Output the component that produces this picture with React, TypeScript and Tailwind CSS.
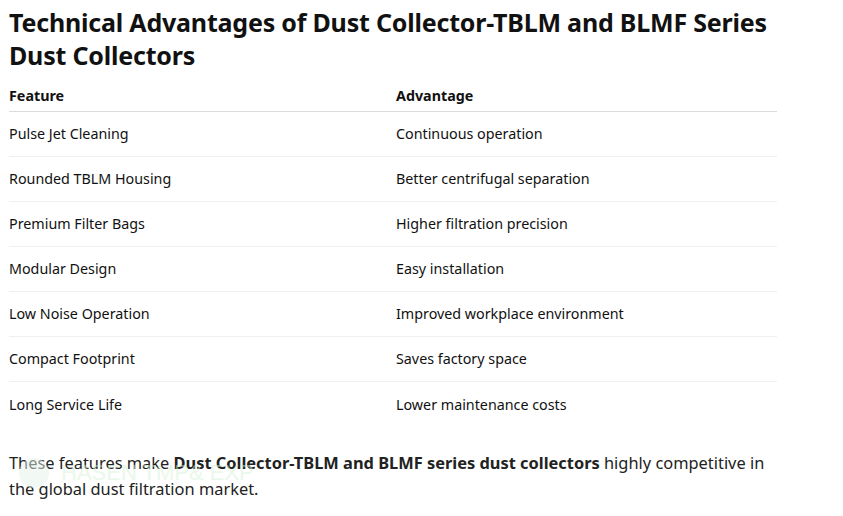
import React from "react";

const rows = [
  ["Pulse Jet Cleaning", "Continuous operation"],
  ["Rounded TBLM Housing", "Better centrifugal separation"],
  ["Premium Filter Bags", "Higher filtration precision"],
  ["Modular Design", "Easy installation"],
  ["Low Noise Operation", "Improved workplace environment"],
  ["Compact Footprint", "Saves factory space"],
  ["Long Service Life", "Lower maintenance costs"],
];

export default function App() {
  return (
    <div className="min-h-[516px] bg-white px-[9px] pt-[6px] text-[#111] font-['Noto_Sans',sans-serif]">
      <h1 className="w-[800px] text-[25px] font-bold leading-[33px] tracking-[-0.2px]">
        Technical Advantages of Dust Collector-TBLM and BLMF Series Dust Collectors
      </h1>

      {/* Table */}
      <div className="mt-[8px] w-[768px] text-[14.3px]">
        <div className="grid grid-cols-[387px_1fr] h-[32px] items-center border-b border-[#dcdcdc] font-bold">
          <div>Feature</div>
          <div>Advantage</div>
        </div>
        {rows.map(([f, a], i) => (
          <div
            key={f}
            className={
              "grid grid-cols-[387px_1fr] h-[45px] items-center " +
              (i < rows.length - 1 ? "border-b border-[#f0f0f0]" : "")
            }
          >
            <div>{f}</div>
            <div>{a}</div>
          </div>
        ))}
      </div>

      {/* Closing paragraph */}
      <div className="relative mt-[23px] w-[768px]">
        <p className="text-[16.4px] leading-[26px] text-[#222]">
          These features make <strong>Dust Collector-TBLM and BLMF series dust collectors</strong> highly competitive in
          the global dust filtration market.
        </p>
        <div className="pointer-events-none absolute left-[10px] top-[8px] flex items-center gap-[12px] opacity-50">
          <div className="h-[30px] w-[30px] rounded-full bg-[#e6f4ec]" />
          <span className="text-[22px] leading-none text-[#d6f2d6] font-['Liberation_Sans',sans-serif]">HASEN TMP&amp; EXP</span>
        </div>
      </div>
    </div>
  );
}
